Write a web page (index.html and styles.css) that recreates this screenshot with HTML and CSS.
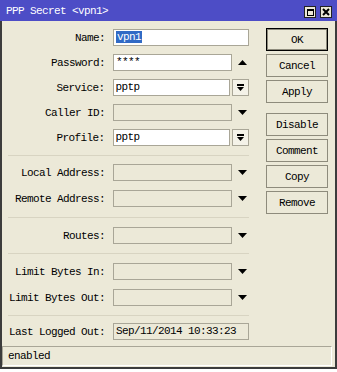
FILE: index.html
```html
<!DOCTYPE html>
<html lang="en">
<head>
    <meta charset="UTF-8">
    <meta name="viewport" content="width=device-width, initial-scale=1.0">
    <title>PPP Secret &lt;vpn1&gt;</title>
    <link rel="stylesheet" href="styles.css">
</head>
<body>
    <div class="window">
        <div class="titlebar">
            <span class="title">PPP Secret &lt;vpn1&gt;</span>
            <div class="title-buttons">
                <span class="tbtn"><span class="max-box"></span></span>
                <span class="tbtn">
                    <svg width="8" height="8" viewBox="0 0 8 8"><path d="M1 1 L7 7 M7 1 L1 7" stroke="#000" stroke-width="2"/></svg>
                </span>
            </div>
        </div>

        <div class="content">
            <div class="form">
                <div class="section first">
                    <div class="row">
                        <label>Name:</label>
                        <div class="field long"><span class="selected">vpn1</span></div>
                    </div>
                    <div class="row">
                        <label>Password:</label>
                        <div class="field">****</div>
                        <div class="arrow">
                            <svg width="9" height="5" viewBox="0 0 9 5"><path d="M0 5 L4.5 0 L9 5 Z" fill="#000"/></svg>
                        </div>
                    </div>
                    <div class="row">
                        <label>Service:</label>
                        <div class="field short">pptp</div>
                        <div class="drop-btn">
                            <svg width="7" height="7" viewBox="0 0 7 7"><rect x="0" y="0" width="7" height="2" fill="#000"/><path d="M0 3 L7 3 L3.5 7 Z" fill="#000"/></svg>
                        </div>
                    </div>
                    <div class="row">
                        <label>Caller ID:</label>
                        <div class="field off"></div>
                        <div class="arrow">
                            <svg width="9" height="5" viewBox="0 0 9 5"><path d="M0 0 L9 0 L4.5 5 Z" fill="#000"/></svg>
                        </div>
                    </div>
                    <div class="row">
                        <label>Profile:</label>
                        <div class="field short">pptp</div>
                        <div class="drop-btn">
                            <svg width="7" height="7" viewBox="0 0 7 7"><rect x="0" y="0" width="7" height="2" fill="#000"/><path d="M0 3 L7 3 L3.5 7 Z" fill="#000"/></svg>
                        </div>
                    </div>
                </div>

                <div class="sep sep-1"></div>

                <div class="section loose">
                    <div class="row">
                        <label>Local Address:</label>
                        <div class="field off"></div>
                        <div class="arrow">
                            <svg width="9" height="5" viewBox="0 0 9 5"><path d="M0 0 L9 0 L4.5 5 Z" fill="#000"/></svg>
                        </div>
                    </div>
                    <div class="row">
                        <label>Remote Address:</label>
                        <div class="field off"></div>
                        <div class="arrow">
                            <svg width="9" height="5" viewBox="0 0 9 5"><path d="M0 0 L9 0 L4.5 5 Z" fill="#000"/></svg>
                        </div>
                    </div>
                </div>

                <div class="sep sep-2"></div>

                <div class="section">
                    <div class="row">
                        <label>Routes:</label>
                        <div class="field off"></div>
                        <div class="arrow">
                            <svg width="9" height="5" viewBox="0 0 9 5"><path d="M0 0 L9 0 L4.5 5 Z" fill="#000"/></svg>
                        </div>
                    </div>
                </div>

                <div class="sep sep-3"></div>

                <div class="section loose">
                    <div class="row">
                        <label>Limit Bytes In:</label>
                        <div class="field off"></div>
                        <div class="arrow">
                            <svg width="9" height="5" viewBox="0 0 9 5"><path d="M0 0 L9 0 L4.5 5 Z" fill="#000"/></svg>
                        </div>
                    </div>
                    <div class="row">
                        <label>Limit Bytes Out:</label>
                        <div class="field off"></div>
                        <div class="arrow">
                            <svg width="9" height="5" viewBox="0 0 9 5"><path d="M0 0 L9 0 L4.5 5 Z" fill="#000"/></svg>
                        </div>
                    </div>
                </div>

                <div class="sep sep-4"></div>

                <div class="section">
                    <div class="row">
                        <label>Last Logged Out:</label>
                        <div class="field long off">Sep/11/2014 10:33:23</div>
                    </div>
                </div>
            </div>

            <div class="buttons">
                <div class="btn-group">
                    <button class="btn default">OK</button>
                    <button class="btn">Cancel</button>
                    <button class="btn">Apply</button>
                </div>
                <div class="btn-group">
                    <button class="btn">Disable</button>
                    <button class="btn">Comment</button>
                    <button class="btn">Copy</button>
                    <button class="btn">Remove</button>
                </div>
            </div>
        </div>

        <div class="statusbar">enabled</div>
    </div>
</body>
</html>
```

FILE: styles.css
```css
body {
    margin: 0;
    background-color: #ffffff;
    font-family: 'Liberation Mono', 'DejaVu Sans Mono', monospace;
    font-size: 11px;
    letter-spacing: -0.6px;
    color: #000;
}
.window {
    width: 337px;
    height: 369px;
    box-sizing: border-box;
    background-color: #ece9d8;
    border: 2px solid #3c3c3c;
    border-top: none;
    display: flex;
    flex-direction: column;
}
.titlebar {
    height: 21px;
    margin: 0 -2px;
    background-color: #4d4dc6;
    color: #fff;
    display: flex;
    align-items: center;
    justify-content: space-between;
    padding: 0 5px 0 6px;
    flex-shrink: 0;
}
.title {
    line-height: 21px;
    padding-top: 2px;
}
.title-buttons {
    display: flex;
    gap: 4px;
    padding-top: 3px;
}
.tbtn {
    width: 12px;
    height: 12px;
    box-sizing: border-box;
    background-color: #ece9d8;
    border: 1px solid #222;
    display: flex;
    align-items: center;
    justify-content: center;
}
.max-box {
    width: 7px;
    height: 7px;
    border: 1px solid #000;
    border-top-width: 2px;
    box-sizing: border-box;
}
.content {
    display: flex;
    padding-top: 8px;
}
.form {
    width: 247px;
}
.section {
    display: flex;
    flex-direction: column;
    gap: 8px;
}
.section.loose {
    gap: 9px;
}
.row {
    display: flex;
    align-items: center;
    height: 17px;
}
.row label {
    width: 103px;
    margin-right: 8px;
    text-align: right;
    white-space: nowrap;
}
.field {
    width: 119px;
    height: 17px;
    box-sizing: border-box;
    background-color: #fff;
    border: 1px solid #a9a697;
    padding: 0 2px;
    line-height: 15px;
    white-space: nowrap;
    overflow: hidden;
}
.field.long {
    width: 136px;
}
.field.short {
    width: 118px;
}
.field.off {
    background-color: #ece9d8;
}
.selected {
    background-color: #316ac5;
    color: #fff;
    padding: 0 1px;
}
.arrow {
    width: 17px;
    height: 17px;
    display: flex;
    align-items: center;
    padding-left: 6px;
    box-sizing: border-box;
}
.drop-btn {
    width: 17px;
    height: 17px;
    margin-left: 2px;
    box-sizing: border-box;
    border: 1px solid #a9a697;
    background-color: #f4f2e8;
    display: flex;
    align-items: center;
    justify-content: center;
}
.sep {
    height: 1px;
    background-color: #d8d4c2;
    margin-left: 6px;
}
.sep-1 {
    margin-top: 9px;
    margin-bottom: 8px;
}
.sep-2 {
    margin-top: 10px;
    margin-bottom: 9px;
}
.sep-3 {
    margin-top: 9px;
    margin-bottom: 9px;
}
.sep-4 {
    margin-top: 9px;
    margin-bottom: 7px;
}
.buttons {
    margin-left: 17px;
    margin-top: -1px;
    display: flex;
    flex-direction: column;
    gap: 10px;
}
.btn-group {
    display: flex;
    flex-direction: column;
    gap: 3px;
}
.btn {
    width: 62px;
    height: 23px;
    box-sizing: border-box;
    background-color: #ece9d8;
    border: 1px solid #8e8b7c;
    font-family: inherit;
    font-size: 11px;
    letter-spacing: -0.6px;
    color: #000;
    padding: 0;
}
.btn.default {
    border: 1px solid #000;
    box-shadow: inset 0 0 0 1px #8e8b7c;
}
.statusbar {
    margin: auto 3px 1px 0;
    height: 20px;
    box-sizing: border-box;
    border: 1px solid #a9a697;
    border-right-color: #fff;
    border-bottom-color: #fff;
    padding: 0 5px;
    line-height: 18px;
}
```
